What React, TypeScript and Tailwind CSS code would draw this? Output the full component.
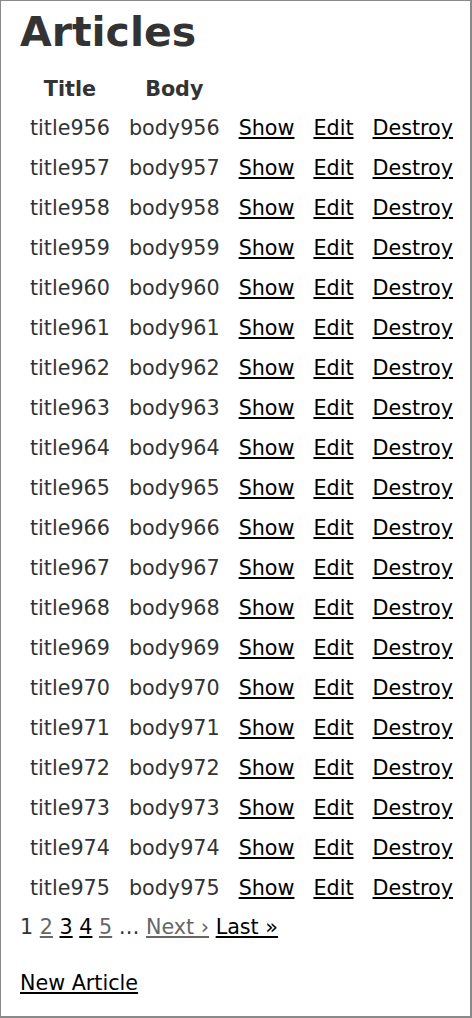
import React from "react";

const articles = Array.from({ length: 20 }, (_, i) => 956 + i);

const App = () => {
  return (
    <div className="h-[1018px] w-[472px] overflow-hidden border-t border-l border-r-2 border-b-2 border-[#8a8a8a] bg-white text-[#333] font-['DejaVu_Sans',sans-serif] text-[20.7px]">
      <div className="pl-[19px] pt-[5px]">
        <h1 className="text-[41px] font-bold leading-[52px] mb-[10px]">Articles</h1>
        <table className="border-collapse">
          <thead>
            <tr>
              <th className="pl-[10px] pr-[9.5px] pt-[9px] pb-[7px] leading-[24px] font-bold">Title</th>
              <th className="px-[9.5px] pt-[9px] pb-[7px] leading-[24px] font-bold">Body</th>
              <th colSpan={3}></th>
            </tr>
          </thead>
          <tbody>
            {articles.map((n) => (
              <tr key={n}>
                <td className="pl-[10px] pr-[9.5px] py-[8px] leading-[24px]">title{n}</td>
                <td className="px-[9.5px] py-[8px] leading-[24px]">body{n}</td>
                <td className="px-[9.5px] py-[8px] leading-[24px]">
                  <a href="#" className="text-black underline">Show</a>
                </td>
                <td className="px-[9.5px] py-[8px] leading-[24px]">
                  <a href="#" className="text-black underline">Edit</a>
                </td>
                <td className="px-[9.5px] py-[8px] leading-[24px]">
                  <a href="#" className="text-black underline">Destroy</a>
                </td>
              </tr>
            ))}
          </tbody>
        </table>
        <div className="leading-[24px] mt-[7px]">
          <span>1</span>{" "}
          <a href="#" className="text-[#666] underline">2</a>{" "}
          <a href="#" className="text-black underline">3</a>{" "}
          <a href="#" className="text-black underline">4</a>{" "}
          <a href="#" className="text-[#666] underline">5</a>{" "}
          <span>…</span>{" "}
          <a href="#" className="text-[#666] underline">Next&nbsp;›</a>{" "}
          <a href="#" className="text-black underline">Last&nbsp;»</a>
        </div>
        <div className="mt-[32px] leading-[24px]">
          <a href="#" className="text-black underline">New Article</a>
        </div>
      </div>
    </div>
  );
};

export default App;
